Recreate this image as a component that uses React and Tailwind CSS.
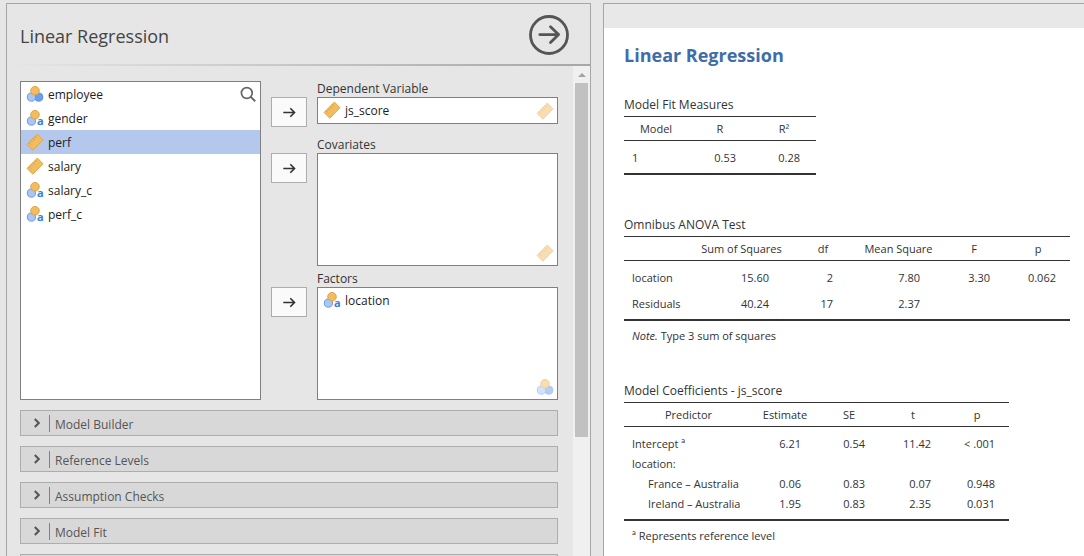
import React from "react";

function NominalIcon({ className = "" }) {
  return (
    <svg viewBox="0 0 16 16" className={`size-4 shrink-0 overflow-visible ${className}`} aria-hidden="true">
      <circle cx="11.7" cy="11.1" r="4.1" fill="#6b9fec" stroke="#4a84dc" strokeWidth="0.9" />
      <circle cx="4.4" cy="11.1" r="4.1" fill="#a9c7f5" stroke="#5a92e4" strokeWidth="0.9" />
      <circle cx="8" cy="4.7" r="4.3" fill="#f0bd62" stroke="#dd9f35" strokeWidth="0.9" />
    </svg>
  );
}

function NominalTextIcon() {
  return (
    <svg viewBox="0 0 16 16" className="size-4 shrink-0 overflow-visible" aria-hidden="true">
      <circle cx="4.4" cy="11.1" r="4.1" fill="#a9c7f5" stroke="#5a92e4" strokeWidth="0.9" />
      <circle cx="8" cy="4.7" r="4.3" fill="#f0bd62" stroke="#dd9f35" strokeWidth="0.9" />
      <text x="10" y="15" fontSize="11" fontWeight="700" fill="#3b7ddd">a</text>
    </svg>
  );
}

function RulerIcon({ className = "" }) {
  return (
    <svg viewBox="0 0 16 16" className={`size-4 shrink-0 overflow-visible ${className}`} aria-hidden="true">
      <path d="M10.4 0 16 5.8 5.8 16.2 0.1 10.4Z" fill="#f0bd62" stroke="#e2a238" strokeWidth="0.9" strokeLinejoin="round" />
      <path d="M2 8.6l2 2M4 6.5l1.6 1.6M6 4.4l2 2M8 2.4l1.6 1.6" stroke="#d9962c" strokeWidth="0.9" fill="none" />
    </svg>
  );
}

const ICONS = { nominal: NominalIcon, text: NominalTextIcon, ruler: RulerIcon };

function Variable({ name, type, selected = false }) {
  const Icon = ICONS[type];
  return (
    <li>
      <button
        type="button"
        className={`flex h-6 w-full items-center gap-[5px] pl-1.5 text-left text-[12px] leading-5 text-[#1c1c1c] ${selected ? "bg-[#b4c8ee]" : ""}`}
      >
        <Icon />
        <span className="pt-0.5">{name}</span>
      </button>
    </li>
  );
}

function Target({ label, heightClass, className = "", variables = [], hint }) {
  return (
    <div className={`grid grid-cols-[36px_1fr] gap-x-2.5 ${className}`}>
      <div className="pt-4">
        <button
          type="button"
          aria-label={`Assign to ${label}`}
          className="flex h-[30px] w-full items-center justify-center border border-[#adadad] bg-[#fafafa]"
        >
          <svg viewBox="0 0 12 12" className="size-3 overflow-visible" fill="none" stroke="#333" strokeWidth="1.6" aria-hidden="true">
            <path d="M0.3 6.5H11.3M7.3 2.3 11.5 6.5 7.3 10.7" />
          </svg>
        </button>
      </div>
      <div>
        <h2 className="h-4 text-[12px] leading-4 text-[#333]">{label}</h2>
        <div className={`relative border border-[#808080] bg-white ${heightClass}`}>
          <ul>
            {variables.map((v) => (
              <Variable key={v.name} {...v} />
            ))}
          </ul>
          <span className="absolute right-1 bottom-1">{hint}</span>
        </div>
      </div>
    </div>
  );
}

function Section({ title }) {
  return (
    <button type="button" className="flex h-[26px] w-full shrink-0 items-center border border-[#adadad] bg-[#d8d8d8] pl-[13px] text-left">
      <svg viewBox="0 0 6 10" className="h-2.5 w-1.5" fill="none" stroke="#555" strokeWidth="2" aria-hidden="true">
        <path d="M0.8 1 4.8 5 0.8 9" />
      </svg>
      <span className="ml-[9px] h-[17px] border-l border-[#808080] pl-[5px] text-[12px] leading-[19px] text-[#555]">{title}</span>
    </button>
  );
}

const VARIABLES = [
  { name: "employee", type: "nominal" },
  { name: "gender", type: "text" },
  { name: "perf", type: "ruler", selected: true },
  { name: "salary", type: "ruler" },
  { name: "salary_c", type: "text" },
  { name: "perf_c", type: "text" },
];

function OptionsPanel() {
  return (
    <section className="flex min-h-0 flex-col border border-b-0 border-[#a6a6a6]">
      <header className="flex h-[60px] shrink-0 items-center justify-between pt-0.5 pr-[21px] pl-[13px]">
        <h1 className="pt-0.5 text-[18px] leading-6 text-[#444]">Linear Regression</h1>
        <button type="button" aria-label="Close options">
          <svg viewBox="0 0 40 40" className="size-10" fill="none" stroke="#555" strokeWidth="2.8" aria-hidden="true">
            <circle cx="20" cy="20" r="18.5" />
            <path d="M10.8 19.6H29.5M21.5 11.8 29.6 19.6 21.5 27.6" strokeLinecap="round" strokeLinejoin="round" />
          </svg>
        </button>
      </header>
      <div className="h-0.5 shrink-0 bg-linear-to-r from-[#e6e6e6] to-[#a6a6a6]" />
      <div className="flex min-h-0 flex-1">
        <div className="min-w-0 flex-1 overflow-hidden pt-[15px] pr-[15px] pl-[13px]">
          <div className="grid grid-cols-[241fr_287fr] gap-x-2.5">
            <div className="relative border border-[#808080] bg-white">
              <ul>
                {VARIABLES.map((v) => (
                  <Variable key={v.name} {...v} />
                ))}
              </ul>
              <button type="button" aria-label="Search variables" className="absolute top-1 right-1">
                <svg viewBox="0 0 16 16" className="size-4" fill="none" stroke="#666" strokeWidth="1.7" aria-hidden="true">
                  <circle cx="6.8" cy="7" r="5.4" />
                  <path d="M10.7 10.9 15.2 15.3" strokeWidth="2" />
                </svg>
              </button>
            </div>
            <div>
              <Target
                label="Dependent Variable"
                heightClass="h-[27px]"
                className="pb-2.5"
                variables={[{ name: "js_score", type: "ruler" }]}
                hint={<RulerIcon className="opacity-50" />}
              />
              <Target label="Covariates" heightClass="h-[113px]" className="pb-[5px]" hint={<RulerIcon className="opacity-50" />} />
              <Target
                label="Factors"
                heightClass="h-[113px]"
                variables={[{ name: "location", type: "text" }]}
                hint={<NominalIcon className="opacity-50" />}
              />
            </div>
          </div>
          <div className="mt-2.5 flex flex-col gap-2.5">
            <Section title="Model Builder" />
            <Section title="Reference Levels" />
            <Section title="Assumption Checks" />
            <Section title="Model Fit" />
            <Section />
          </div>
        </div>
        <div className="flex w-[17px] shrink-0 flex-col items-center bg-[#f0f0f0]" aria-hidden="true">
          <div className="flex h-[17px] shrink-0 items-center">
            <svg viewBox="0 0 8 4" className="h-1 w-2" fill="#a3a3a3">
              <path d="M4 0 8 4H0Z" />
            </svg>
          </div>
          <div className="h-[354px] w-[13px] bg-[#c1c1c1]" />
        </div>
      </div>
    </section>
  );
}

function ResultTable({ title, widthClass, columns, rows, dense = false, note }) {
  return (
    <div className={note ? "" : "pb-[5px]"}>
      <table className={`table-fixed border-separate border-spacing-0 text-[11px] leading-5 text-[#333] ${widthClass}`}>
        <caption className="h-[21px] text-left text-[12px] leading-5">{title}</caption>
        <colgroup>
          {columns.map((c, i) => (
            <col key={i} className={c.width} />
          ))}
        </colgroup>
        <thead>
          <tr>
            {columns.map((c, i) => (
              <th key={i} scope="col" className="h-[25px] border-y border-[#333] p-0 text-center font-normal whitespace-nowrap">
                {c.label}
              </th>
            ))}
          </tr>
        </thead>
        <tbody>
          {rows.map((row, r) => {
            const top = r === 0 ? "pt-[7px]" : dense ? "pt-0" : "pt-[3px]";
            const bottom = r === rows.length - 1 ? "pb-[5px] border-b-2 border-[#333]" : dense ? "pb-0" : "pb-[3px]";
            return (
              <tr key={r}>
                {columns.map((c, i) => (
                  <td key={i} className={`whitespace-nowrap ${top} ${bottom} ${i === 0 ? "pl-2 text-left" : `text-right ${c.pad}`}`}>
                    {row[i]}
                  </td>
                ))}
              </tr>
            );
          })}
        </tbody>
      </table>
      {note && <p className="mt-[5px] pl-2 text-[11px] leading-5 text-[#333]">{note}</p>}
    </div>
  );
}

function ResultsPanel() {
  return (
    <section className="flex min-h-0 min-w-0 flex-col border-t border-l border-[#a6a6a6]">
      <div className="h-6 shrink-0 bg-[#e8e8e8]" />
      <div className="min-h-0 flex-1 overflow-hidden bg-white pt-[15px] pl-5">
        <h1 className="text-[18px] leading-6 font-bold text-[#3e6da9]">Linear Regression</h1>
        <div className="mt-7 flex flex-col gap-[35px]">
          <ResultTable
            title="Model Fit Measures"
            widthClass="w-[192px]"
            columns={[
              { label: "Model", width: "w-16" },
              { label: "R", width: "w-16", pad: "pr-4" },
              { label: "R²", width: "w-16", pad: "pr-4" },
            ]}
            rows={[["1", "0.53", "0.28"]]}
          />
          <ResultTable
            title="Omnibus ANOVA Test"
            widthClass="w-[446px]"
            columns={[
              { label: "", width: "w-[68px]" },
              { label: "Sum of Squares", width: "w-[99px]", pad: "pr-[22px]" },
              { label: "df", width: "w-16", pad: "pr-[22px]" },
              { label: "Mean Square", width: "w-[87px]", pad: "pr-[22px]" },
              { label: "F", width: "w-16", pad: "pr-4" },
              { label: "p", width: "w-16", pad: "pr-3.5" },
            ]}
            rows={[
              ["location", "15.60", "2", "7.80", "3.30", "0.062"],
              ["Residuals", "40.24", "17", "2.37", "", ""],
            ]}
            note={
              <>
                <em>Note.</em> Type 3 sum of squares
              </>
            }
          />
          <ResultTable
            title="Model Coefficients - js_score"
            widthClass="w-[385px]"
            dense
            columns={[
              { label: "Predictor", width: "w-[129px]" },
              { label: "Estimate", width: "w-16", pad: "pr-4" },
              { label: "SE", width: "w-16", pad: "pr-4" },
              { label: "t", width: "w-16", pad: "pr-3.5" },
              { label: "p", width: "w-16", pad: "pr-3.5" },
            ]}
            rows={[
              ["Intercept ª", "6.21", "0.54", "11.42", "< .001"],
              ["location:", "", "", "", ""],
              [<span className="pl-4">France – Australia</span>, "0.06", "0.83", "0.07", "0.948"],
              [<span className="pl-4">Ireland – Australia</span>, "1.95", "0.83", "2.35", "0.031"],
            ]}
            note="ª Represents reference level"
          />
        </div>
      </div>
    </section>
  );
}

export default function App() {
  return (
    <main className="grid h-screen grid-cols-[585fr_481fr] grid-rows-[minmax(0,1fr)] gap-x-3 overflow-hidden bg-[#e6e6e6] pt-[3px] pl-1.5 font-['Open_Sans','Noto_Sans',sans-serif]">
      <OptionsPanel />
      <ResultsPanel />
    </main>
  );
}
